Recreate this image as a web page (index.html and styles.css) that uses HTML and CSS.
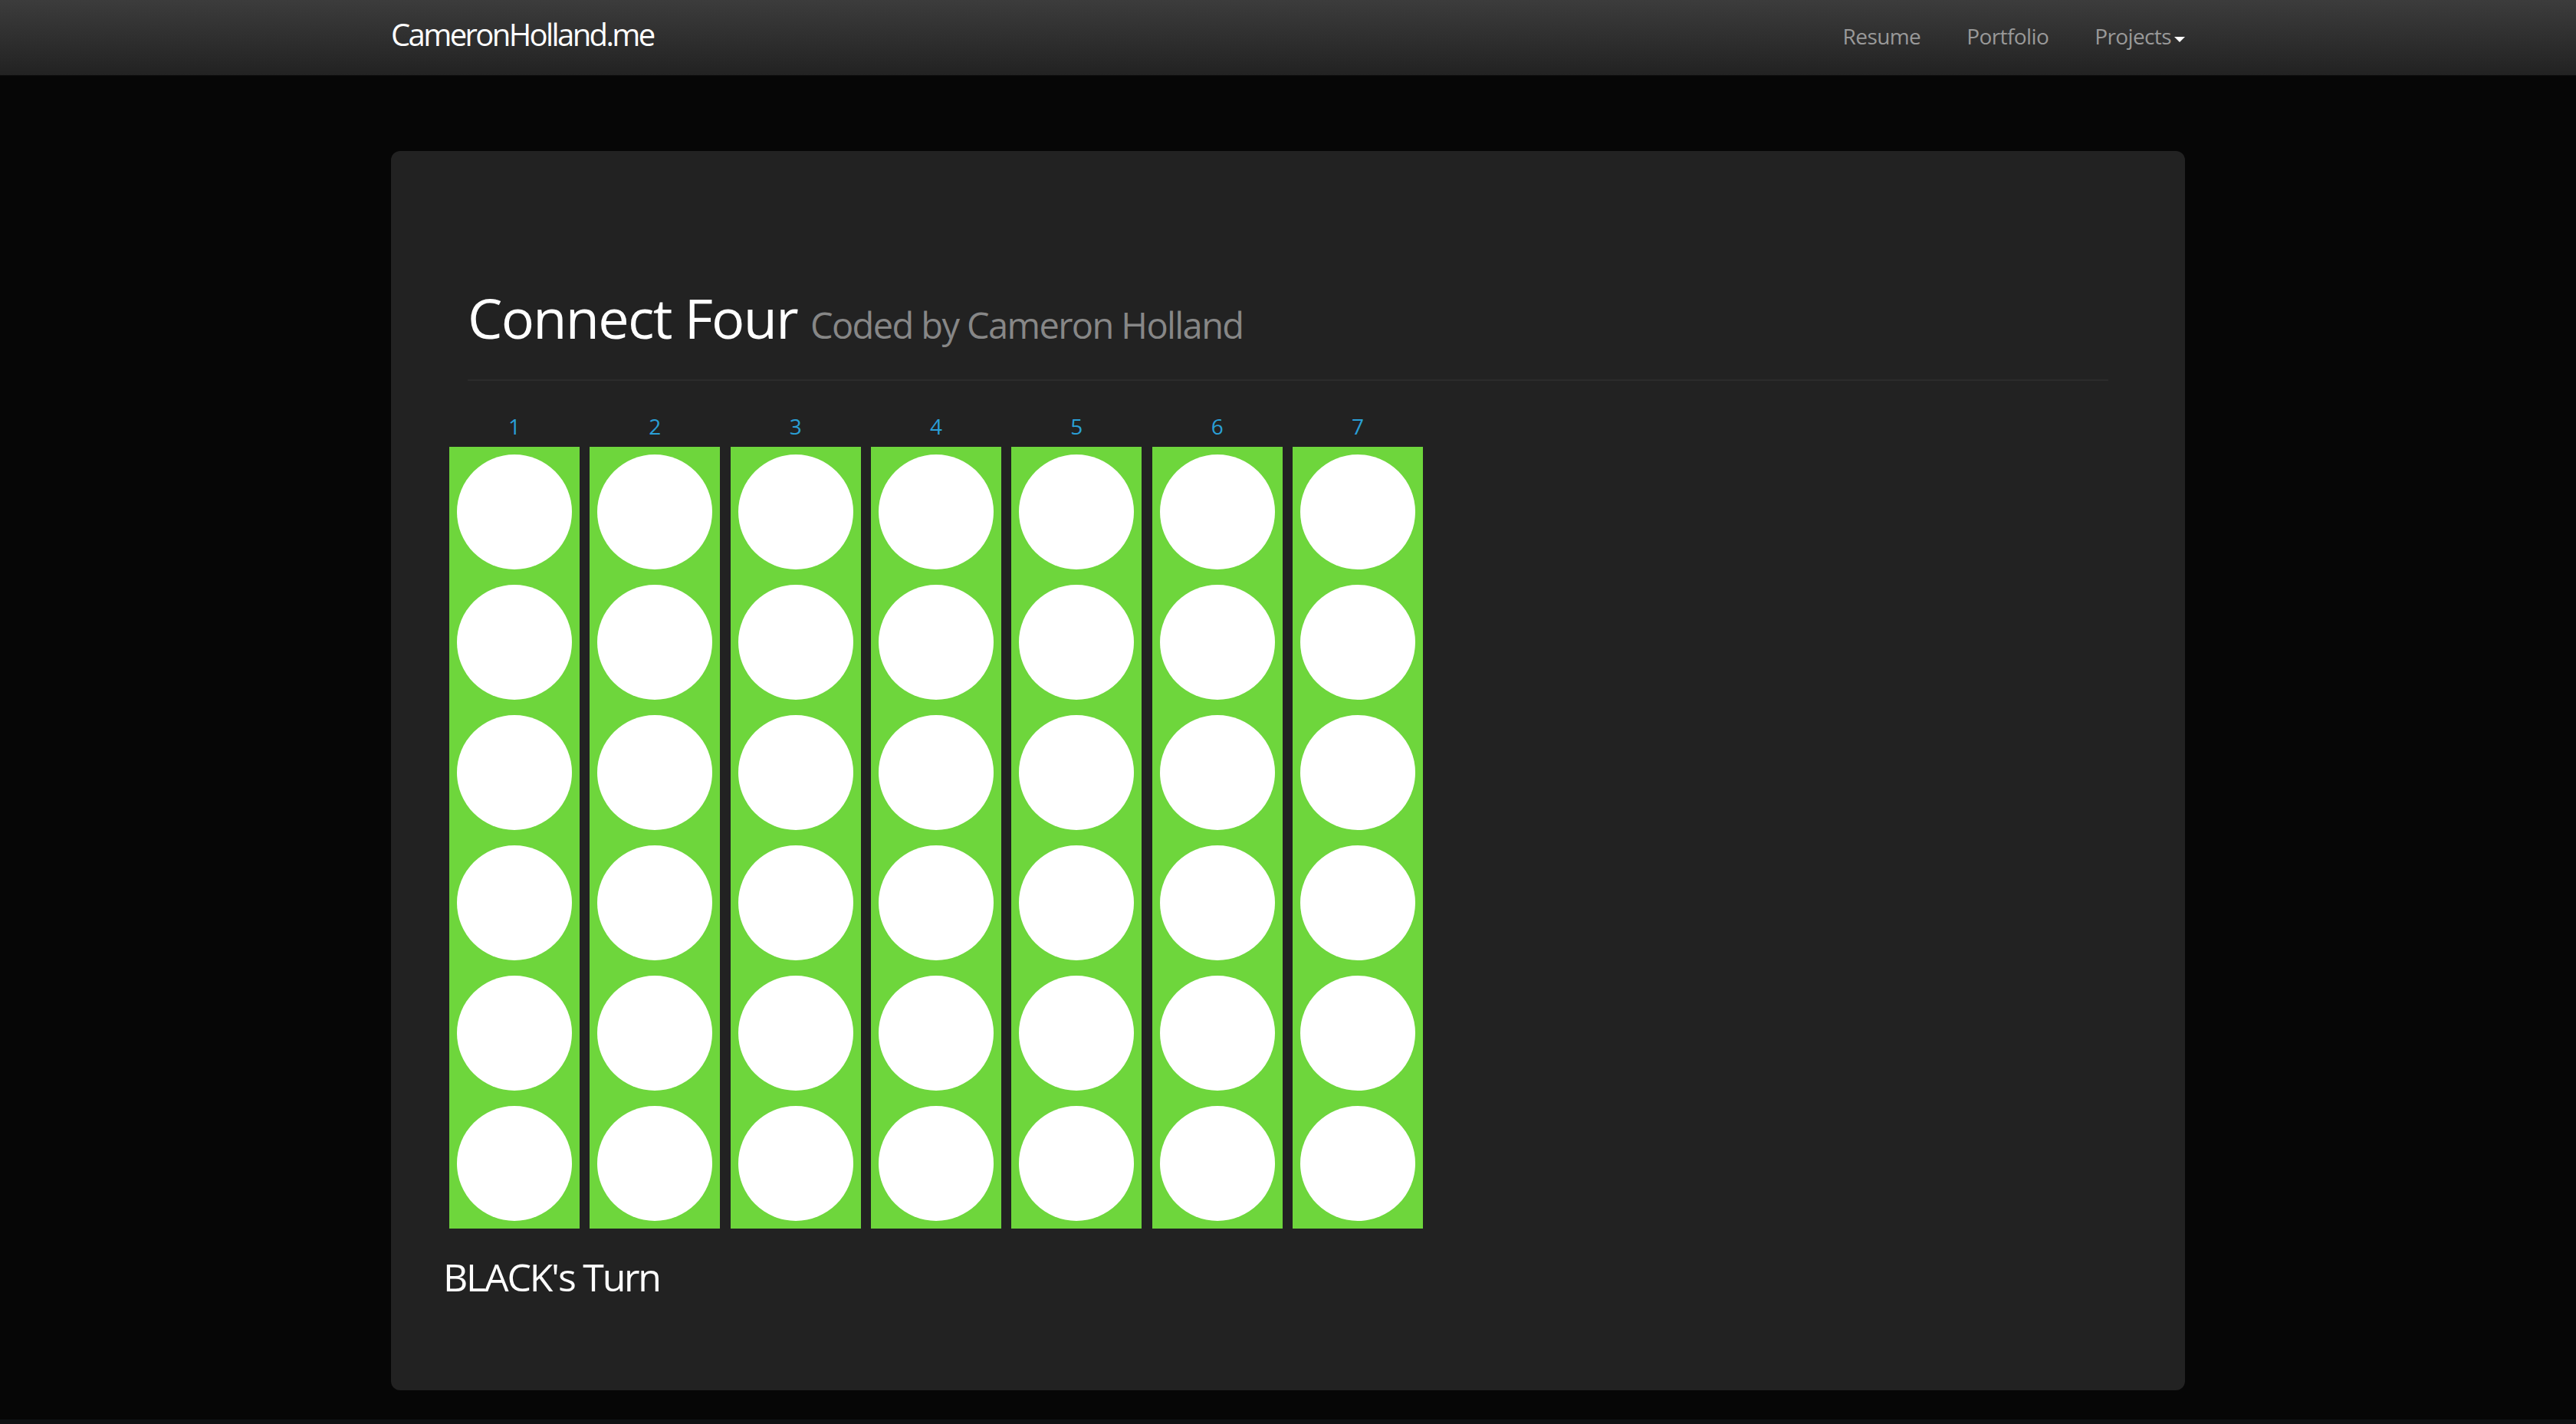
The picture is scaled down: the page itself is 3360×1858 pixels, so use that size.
FILE: index.html
```html
<!DOCTYPE html>
<html lang="en">
<head>
<meta charset="utf-8">
<title>Connect Four</title>
<link rel="stylesheet" href="styles.css">
</head>
<body>
<header class="navbar">
  <div class="container nav-inner">
    <a class="brand" href="#">CameronHolland.me</a>
    <ul class="nav">
      <li><a href="#">Resume</a></li>
      <li><a href="#">Portfolio</a></li>
      <li><a href="#" class="dropdown">Projects<span class="caret"></span></a></li>
    </ul>
  </div>
</header>
<main class="container">
  <section class="hero">
    <div class="page-header">
      <h1>Connect Four <small>Coded by Cameron Holland</small></h1>
    </div>
    <div class="game">
      <div class="board">
        <div class="col"><a class="num" href="#">1</a><div class="slots"><span></span><span></span><span></span><span></span><span></span><span></span></div></div>
        <div class="col"><a class="num" href="#">2</a><div class="slots"><span></span><span></span><span></span><span></span><span></span><span></span></div></div>
        <div class="col"><a class="num" href="#">3</a><div class="slots"><span></span><span></span><span></span><span></span><span></span><span></span></div></div>
        <div class="col"><a class="num" href="#">4</a><div class="slots"><span></span><span></span><span></span><span></span><span></span><span></span></div></div>
        <div class="col"><a class="num" href="#">5</a><div class="slots"><span></span><span></span><span></span><span></span><span></span><span></span></div></div>
        <div class="col"><a class="num" href="#">6</a><div class="slots"><span></span><span></span><span></span><span></span><span></span><span></span></div></div>
        <div class="col"><a class="num" href="#">7</a><div class="slots"><span></span><span></span><span></span><span></span><span></span><span></span></div></div>
      </div>
      <h2 class="turn">BLACK's Turn</h2>
    </div>
  </section>
</main>
<footer class="footer"></footer>
</body>
</html>
```

FILE: styles.css
```css
* { box-sizing: border-box; }

html, body {
  margin: 0;
  padding: 0;
}

body {
  background: #060606;
  font-family: "Open Sans", "Noto Sans", "DejaVu Sans", sans-serif;
  color: #888;
}

a { text-decoration: none; }

.container {
  width: 2340px;
  margin: 0 auto;
}

.navbar {
  height: 99px;
  background: linear-gradient(to bottom, #3c3c3c 0%, #222222 100%);
  border-bottom: 1px solid #0c0c0c;
}

.nav-inner {
  height: 98px;
  display: flex;
  align-items: center;
  justify-content: space-between;
}

.brand {
  color: #ffffff;
  font-size: 40px;
  line-height: 40px;
  letter-spacing: -2.6px;
  margin-bottom: 8px;
}

.nav {
  list-style: none;
  margin: 0 0 5px 0;
  padding: 0;
  display: flex;
}

.nav a {
  display: block;
  padding: 0 30px;
  color: #999999;
  font-size: 28px;
  line-height: 40px;
  letter-spacing: -0.6px;
}

.nav li:last-child a {
  padding-right: 0;
}

.caret {
  display: inline-block;
  width: 0;
  height: 0;
  margin-left: 4px;
  vertical-align: 3px;
  border-top: 7px solid #ffffff;
  border-left: 7px solid transparent;
  border-right: 7px solid transparent;
}

.hero {
  margin-top: 98px;
  background: #222222;
  border-radius: 12px;
  padding: 177px 100px 118px 68px;
}

.page-header {
  margin-left: 32px;
  padding-bottom: 31px;
  border-bottom: 2px solid #2b2b2b;
}

.page-header h1 {
  margin: 0;
  color: #ffffff;
  font-size: 72px;
  font-weight: 400;
  line-height: 80px;
  letter-spacing: -1.7px;
}

.page-header small {
  color: #878787;
  font-size: 47px;
  letter-spacing: -1.6px;
}

.game {
  margin-top: 39px;
}

.board {
  display: flex;
  gap: 13.33px;
  margin-left: 8px;
}

.col {
  width: 170px;
  display: flex;
  flex-direction: column;
  align-items: center;
}

.num {
  display: block;
  color: #2a9fd6;
  font-size: 28px;
  line-height: 40px;
  height: 40px;
  margin-bottom: 7px;
}

.slots {
  width: 170px;
  background: #6ed63c;
  display: flex;
  flex-direction: column;
}

.slots span {
  display: block;
  width: 150px;
  height: 150px;
  margin: 10px;
  border-radius: 50%;
  background: #ffffff;
}

.turn {
  margin: 33px 0 0 0;
  color: #ffffff;
  font-size: 50px;
  font-weight: 400;
  line-height: 60px;
  letter-spacing: -2.2px;
}

.footer {
  margin-top: 38px;
  height: 40px;
  background: #0f1113;
}
```
